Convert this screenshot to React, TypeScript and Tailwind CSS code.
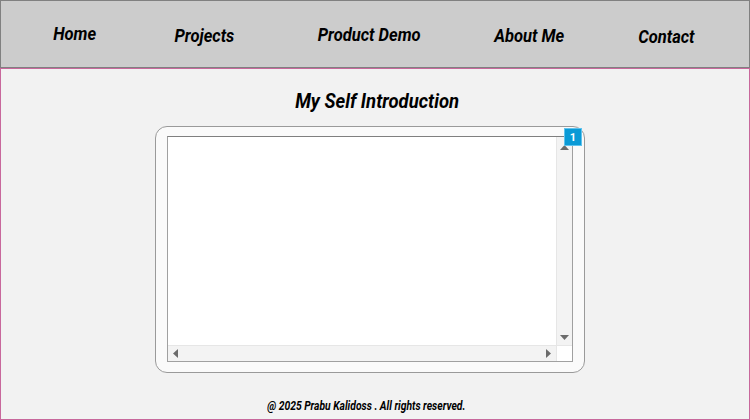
import React from "react";

const font = { fontFamily: "Roboto, 'Liberation Sans', sans-serif" };

function NavItem({ label, w, cls }: { label: string; w: string; cls: string }) {
  return (
    <div className={`flex justify-center ${w} ${cls}`}>
      <span className="inline-block whitespace-nowrap origin-center scale-x-[0.87] font-bold italic text-[19px] leading-none text-black">
        {label}
      </span>
    </div>
  );
}

export default function App() {
  return (
    <div className="w-[750px] h-[420px] bg-[#f2f2f2] flex flex-col" style={font}>
      <header className="h-[68px] bg-[#cccccc] border border-[#808080] flex items-center pl-[53px]">
        <NavItem label="Home" w="w-[42px]" cls="-mt-[2px]" />
        <NavItem label="Projects" w="w-[61px] ml-[78px]" cls="mt-[2px]" />
        <NavItem label="Product Demo" w="w-[102px] ml-[83px]" cls="" />
        <NavItem label="About Me" w="w-[72px] ml-[73px]" cls="mt-[2px]" />
        <NavItem label="Contact" w="w-[57px] ml-[73px]" cls="mt-[4px]" />
      </header>
      <main className="flex-1 border border-[#c8689c] flex flex-col items-center">
        <h1 className="mt-[22px] ml-[5px] whitespace-nowrap font-bold italic text-[21px] leading-none text-black inline-block scale-x-[0.88]">
          My Self Introduction
        </h1>
        <div className="relative mt-[14px] mr-[10px] w-[430px] h-[247px] rounded-[12px] border border-[#9a9a9a] bg-[#fafafa] pt-[9px] px-[11px]">
          <div className="w-[406px] h-[226px] border border-[#a0a0a0] border-t-[#7f7f7f] bg-white flex flex-col">
            <div className="flex-1 flex">
              <div className="flex-1 bg-white" />
              <div className="w-[16px] bg-[#f3f3f3] border-l border-[#e6e6e6] flex flex-col items-center justify-between pt-[8px] pb-[5px]">
                <svg width="9" height="5" viewBox="0 0 9 5"><polygon points="4.5,0 9,5 0,5" fill="#6b6b6b" /></svg>
                <svg width="9" height="5" viewBox="0 0 9 5"><polygon points="0,0 9,0 4.5,5" fill="#6b6b6b" /></svg>
              </div>
            </div>
            <div className="h-[16px] flex">
              <div className="flex-1 bg-[#f3f3f3] border-t border-[#e6e6e6] flex items-center justify-between px-[5px]">
                <svg width="5" height="9" viewBox="0 0 5 9"><polygon points="5,0 5,9 0,4.5" fill="#6b6b6b" /></svg>
                <svg width="5" height="9" viewBox="0 0 5 9"><polygon points="0,0 5,4.5 0,9" fill="#6b6b6b" /></svg>
              </div>
              <div className="w-[16px] bg-white border-l border-t border-[#e6e6e6]" />
            </div>
          </div>
          <div className="absolute top-[1px] right-[2px] w-[18px] h-[18px] bg-[#0a9ad6] border border-[#5fc3ee] flex items-center justify-center text-white text-[11px] font-bold leading-none">
            1
          </div>
        </div>
        <footer className="mt-[27px] mr-[18px] whitespace-nowrap font-bold italic text-[12px] leading-none text-black inline-block scale-x-[0.86]">
          @ 2025 Prabu Kalidoss . All rights reserved.
        </footer>
      </main>
    </div>
  );
}
